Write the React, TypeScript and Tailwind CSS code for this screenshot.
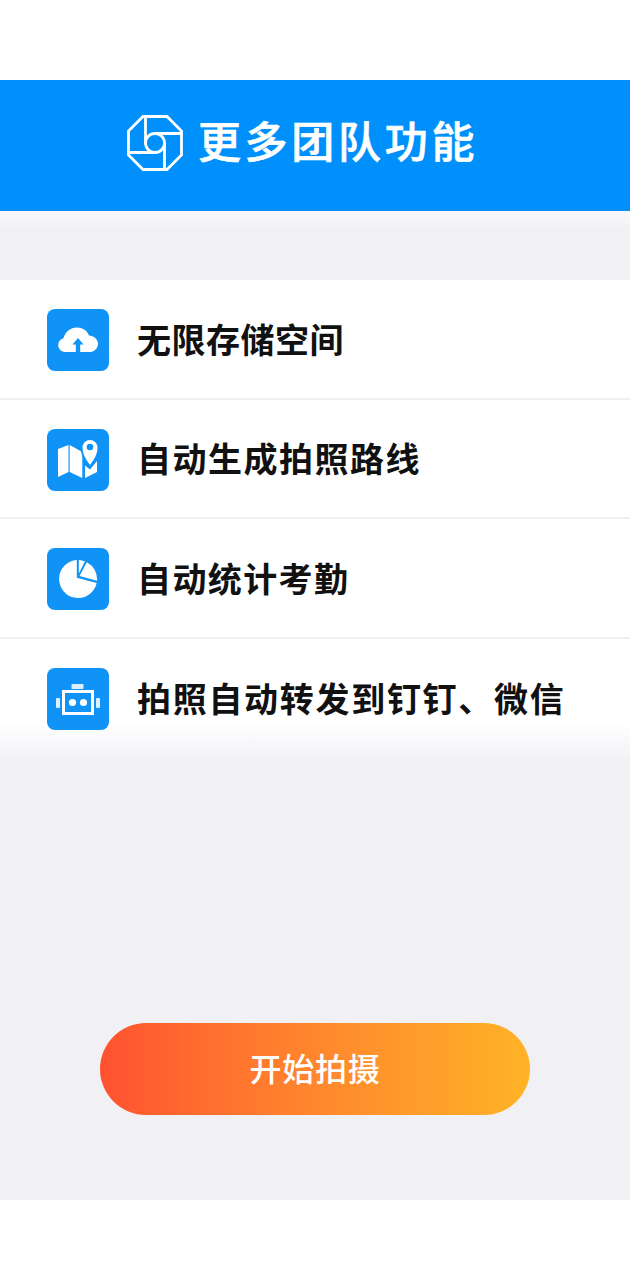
import React from "react";

const cjk = "font-['Noto_Sans_CJK_SC','Noto_Sans',sans-serif]";

function CloudIcon() {
    return (
        <svg width="42" height="26" viewBox="0 0 42 26">
            <path fill="#fff" d="M8 25a7 7 0 0 1-1.500-13.800C8 5 13.500 0.500 20 0.500c5.500 0 10.200 3.200 12 8 4.800.3 9 3.800 9 8.200 0 4.600-3.900 8.300-8.500 8.300z" />
            <path fill="#0f93f6" d="M21 11 15.500 17.500H18.800V25H23.200V17.500H26.500z" />
        </svg>
    );
}

function MapIcon() {
    return (
        <svg width="40" height="42" viewBox="0 0 40 42" className="-mt-1">
            <path fill="#fff" d="M0 12 10.500 8V35L0 40z" />
            <path fill="#fff" d="M11.700 8 24.300 15V41L11.700 35z" />
            <path fill="#fff" d="M27 28.500 32 32.500 39 24V35L27 41z" />
            <path fill="#0f93f6" d="M32 30C26 23 22.500 17 22.500 10.500a9.500 9.500 0 0 1 19 0C41.500 17 38 23 32 30z" />
            <path fill="#fff" d="M32 28C27 21.500 24.500 16 24.500 10.500a7.500 7.500 0 0 1 15 0C39.500 16 37 21.500 32 28z" />
            <circle cx="32" cy="10" r="3.300" fill="#0f93f6" />
        </svg>
    );
}

function PieIcon() {
    return (
        <svg width="40" height="40" viewBox="0 0 40 40">
            <path fill="#fff" d="M18.800 1A19 19 0 1 0 38.700 24L18.800 18.800z" />
            <path fill="#fff" d="M20.800 1A19 19 0 0 1 27 2.300L20.800 14.500z" />
            <path fill="#fff" d="M21.500 17 28.800 3.200A19 19 0 0 1 39 21.800z" />
        </svg>
    );
}

function RobotIcon() {
    return (
        <svg width="44" height="31" viewBox="0 0 44 31">
            <rect x="15.500" y="0" width="12" height="5" rx="1" fill="#fff" opacity="0.85" />
            <rect x="7.500" y="7.500" width="29" height="22" fill="none" stroke="#fff" strokeWidth="3" />
            <rect x="0" y="14" width="4" height="10" rx="1" fill="#fff" opacity="0.85" />
            <rect x="40" y="14" width="4" height="10" rx="1" fill="#fff" opacity="0.85" />
            <circle cx="16.500" cy="18.500" r="3.600" fill="#fff" />
            <circle cx="27.500" cy="18.500" r="3.600" fill="#fff" />
        </svg>
    );
}

function LogoIcon() {
    return (
        <svg width="56" height="56" viewBox="0 0 56 56" fill="none" stroke="#fff" strokeWidth="2.800" className="mt-[2px]">
            <path d="M16 1.500H40L54.500 16V40L40 54.500H16L1.500 40V16z" />
            <circle cx="28" cy="28" r="9.500" />
            <path d="M18.500 1.500V28M28 18.500H54.500M37.500 28V54.500M1.500 37.500H28" />
        </svg>
    );
}

const features = [
    { icon: <CloudIcon />, label: "无限存储空间", type: "tracking-[0.500px]" },
    { icon: <MapIcon />, label: "自动生成拍照路线", type: "tracking-[1.500px]" },
    { icon: <PieIcon />, label: "自动统计考勤", type: "tracking-[1.400px]" },
    { icon: <RobotIcon />, label: "拍照自动转发到钉钉、微信", type: "tracking-[1.700px]" },
];

export default function App() {
    return (
        <div className={`flex h-[1280px] w-[630px] flex-col overflow-hidden bg-white ${cjk}`}>
            <div className="h-20 bg-white" />

            <div className="flex h-[131px] items-center justify-center gap-[15px] bg-[#0090fb] pr-[25px] pb-[8px]">
                <LogoIcon />
                <span className="-mt-1 text-[43px] leading-none font-medium tracking-[3.700px] text-white [-webkit-text-stroke:0.6px_white]">更多团队功能</span>
            </div>

            <div className="flex flex-1 flex-col bg-[#f1f1f5]">
                <div className="h-[69px] bg-gradient-to-b from-[#f8f8fa] to-[#f1f1f5] to-30%" />
                <div className="bg-white">
                    {features.map((f, i) => (
                        <div
                            key={f.label}
                            className={`flex h-[119.5px] items-center gap-7 pl-[47px] ${i < 3 ? "border-b-2 border-[#f0f0f2] pt-[3px]" : "bg-gradient-to-b from-white from-70% to-[#f3f3f7] pt-[2px]"}`}
                        >
                            <div className="flex size-[62px] shrink-0 items-center justify-center rounded-lg bg-[#0f93f6]">
                                {f.icon}
                            </div>
                            <span className={`mb-[3px] text-[34px] leading-none font-bold whitespace-nowrap text-[#111] ${f.type}`}>
                                {f.label}
                            </span>
                        </div>
                    ))}
                </div>

                <div className="mt-auto mb-[85px] flex justify-center">
                    <button className="h-[92px] w-[430px] rounded-full bg-gradient-to-r from-[#ff5130] to-[#ffb326] pb-1 text-[32px] font-medium tracking-[0.700px] text-white">
                        开始拍摄
                    </button>
                </div>
            </div>

            <div className="h-20 bg-white" />
        </div>
    );
}
